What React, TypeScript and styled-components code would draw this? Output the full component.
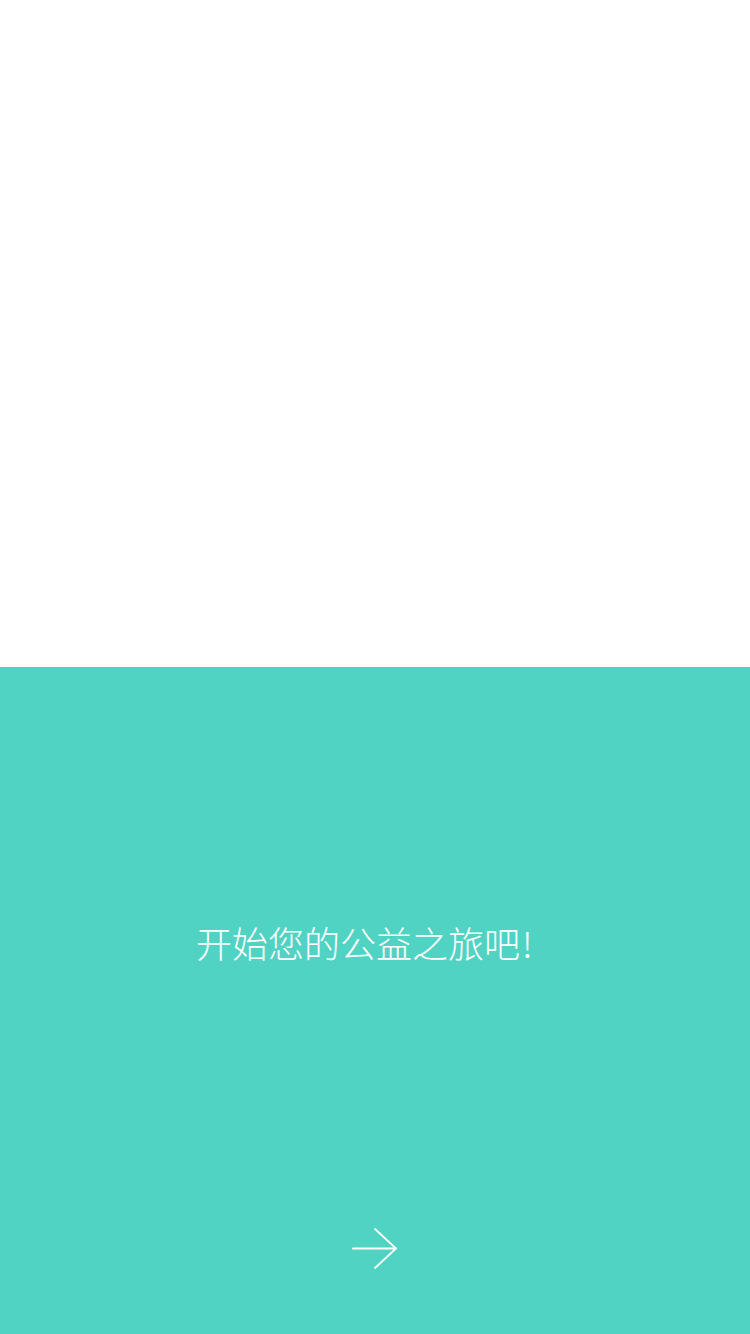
import React from "react";
import styled, { createGlobalStyle } from "styled-components";

const Global = createGlobalStyle`
  html, body { margin: 0; padding: 0; background: #ffffff; }
  body { font-family: "Noto Sans CJK SC", "Noto Sans", sans-serif; }
`;

const Page = styled.div`
  width: 750px;
  height: 1334px;
  display: flex;
  flex-direction: column;
`;

const Top = styled.div`
  height: 667px;
  background: #ffffff;
`;

const Bottom = styled.div`
  height: 667px;
  background: #51d3c3;
  display: flex;
  flex-direction: column;
  align-items: center;
`;

const Title = styled.div`
  margin-top: 252px;
  height: 46px;
  line-height: 46px;
  font-size: 36px;
  font-weight: 300;
  color: #ffffff;
  white-space: nowrap;
  margin-left: -14px;
`;

const Bang = styled.span`
  display: inline-block;
  width: 20px;
  padding-left: 2px;
  box-sizing: border-box;
`;

const NextButton = styled.button`
  margin-top: 262px;
  width: 48px;
  height: 44px;
  padding: 0;
  border: none;
  background: transparent;
  display: flex;
  align-items: center;
  justify-content: center;
  cursor: pointer;
`;

export default function App() {
  return (
    <>
      <Global />
      <Page>
        <Top />
        <Bottom>
          <Title>
            开始您的公益之旅吧<Bang>!</Bang>
          </Title>
          <NextButton aria-label="next">
            <svg width="48" height="44" viewBox="0 0 48 44" fill="none">
              <path d="M2 21.5 H45" stroke="#fff" strokeWidth="1.8" strokeLinecap="round" />
              <path d="M24 2 L45 21.5 L24 41" stroke="#fff" strokeWidth="1.8" strokeLinecap="round" strokeLinejoin="miter" />
            </svg>
          </NextButton>
        </Bottom>
      </Page>
    </>
  );
}
